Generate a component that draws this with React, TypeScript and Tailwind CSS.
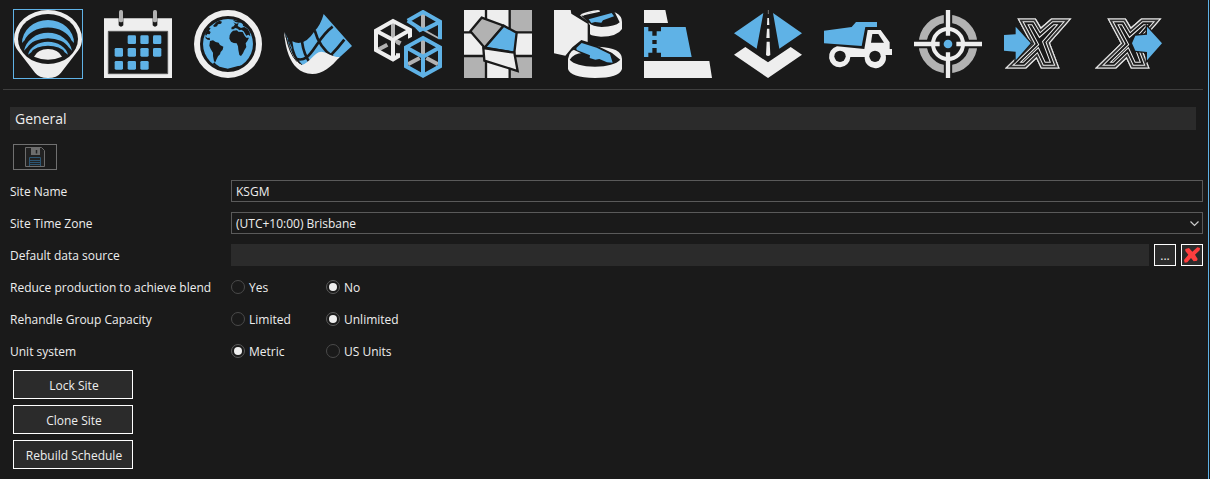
import React, { useId, useState } from "react";

const BLUE = "#5fb2e6";
const WHITE = "#eeeeee";
const GREY = "#b2b2b2";
const DARK = "#1a1a1a";

type IconProps = { children: React.ReactNode; left?: boolean };

/* Toolbar drawings share a 204-unit square canvas. */
function Canvas({ children, left = false }: IconProps) {
  return (
    <svg
      viewBox={left ? "42 30 204 204" : "312 30 204 204"}
      className="size-[68px]"
      aria-hidden="true"
    >
      {children}
    </svg>
  );
}

function PitIcon() {
  return (
    <Canvas left>
      <path d="M42 118A102 88 0 0 1 246 118Q246 137 235 151L183 218Q171 234 144 234Q117 234 105 218L53 151Q42 137 42 118Z" fill={WHITE} />
      <ellipse cx="144" cy="117" rx="90" ry="75" fill={DARK} />
      <g fill={BLUE}>
        <path d="M66 129A78 69 0 0 1 222 129L214 121A72 50 0 0 0 74 121Z" />
        <path d="M72 152A73 64 0 0 1 216 152L206 142A66 42 0 0 0 82 142Z" />
        <path d="M84 164A61 47 0 0 1 204 164L194 157A52 27 0 0 0 94 157Z" />
      </g>
      <path d="M102 170Q114 147 144 147Q174 147 186 170Q144 188 102 170Z" fill={WHITE} />
    </Canvas>
  );
}

function CalendarIcon() {
  const cells = [
    [383, 106], [421, 106], [459, 106],
    [344, 144], [383, 144], [421, 144], [459, 144],
    [344, 183], [383, 183], [421, 183],
  ];
  return (
    <Canvas>
      <path d="M312 55H516V234H312Z" fill={WHITE} />
      <path d="M325 94H503V221H325Z" fill={DARK} stroke="#555" strokeWidth="3" />
      <path d="M356 54H370V76Q363 84 356 76ZM458 54H472V76Q465 84 458 76Z" fill={DARK} />
      <rect x="357" y="30" width="12" height="37" rx="5" fill={GREY} />
      <rect x="459" y="30" width="12" height="37" rx="5" fill={GREY} />
      {cells.map(([x, y]) => (
        <rect key={`${x}-${y}`} x={x} y={y} width="25" height="26" rx="4" fill={BLUE} />
      ))}
    </Canvas>
  );
}

function GlobeIcon() {
  return (
    <Canvas left>
      <circle cx="144" cy="132" r="93" fill="none" stroke={WHITE} strokeWidth="18" />
      <circle cx="144" cy="132" r="75" fill={BLUE} />
      <g fill={DARK}>
        <path d="M90 123L99 121L107 126L116 128L120 135L130 140L128 149L122 156L120 163L114 169L109 179L106 187L102 184L99 168L99 158L92 147L88 137Z" />
        <path d="M153 98L159 92L171 91L175 95L188 96L194 107L199 113L207 113L202 123L197 130L199 141L193 151L189 160L183 168L178 165L175 149L174 139L170 130L161 129L153 125L148 116L149 106Z" />
        <path d="M154 88L155 81L161 79L165 73L160 67L169 71L176 69L173 78L183 84L193 81L203 87L209 97L211 109L205 104L199 107L191 94L184 89L178 91L173 86L166 84L160 88Z" />
        <path d="M109 67L118 62L126 65L123 71L114 73L111 79L104 81L99 78ZM84 83L92 84L87 92L92 96L89 103L82 102L78 108L75 102ZM76 109L82 114L89 113L90 120L83 119L77 115Z" />
        <path d="M158 59L169 62L177 60L184 67L177 68L166 66ZM188 68L201 77L206 87L197 82L189 77Z" />
        <path d="M103 187L108 193L119 200L143 206L160 202L174 198L185 197Q144 225 98 193Z" />
      </g>
    </Canvas>
  );
}

function SurfaceIcon() {
  return (
    <Canvas>
      <path d="M313 97L319 110C330 151 340 181 365 197L340 176L335 142C326 121 320 108 313 97Z" fill={BLUE} />
      <path d="M431 42L516 138L474 176L424 160L370 198Q342 171 337 124Q373 142 404 93Q422 75 431 42Z" fill={BLUE} />
      <path d="M404 91Q418 142 458 170M366 125Q371 164 391 190M338 172C394 202 400 122 458 80M452 166Q473 145 493 119" fill="none" stroke={DARK} strokeWidth="8" />
      <path d="M312 96C330 153 344 181 365 195C388 190 402 156 424 155C446 157 452 171 479 171C453 201 428 222 397 222C358 221 337 194 326 165Q316 140 312 96Z" fill={WHITE} />
      <path d="M318 109Q327 159 351 185M324 117Q335 164 359 191" fill="none" stroke={DARK} strokeWidth="3" />
    </Canvas>
  );
}

function CubesIcon() {
  return (
    <Canvas left>
      <g fill="none" strokeWidth="12" strokeLinejoin="miter">
        <path d="M99 61V112M51 151L82 134M105 121L122 130M113 134L119 123" stroke={GREY} />
        <path d="M150 116V90L99 63L48 92V150L99 178L114 169V160M48 92L99 119L150 90M99 119V178" stroke={WHITE} />
        <path d="M189 38V92M174 84L237 119" stroke={GREY} />
        <path d="M143 62L189 36L240 65V118M143 62L189 91L240 65M170 80L184 94" stroke={BLUE} />
      </g>
      <path d="M122 130V129L189 92L246 123V132L189 105Z" fill={DARK} />
      <g fill="none" strokeWidth="12">
        <path d="M189 116V166M144 193L179 174M234 193L199 174" stroke={GREY} />
        <path d="M189 114L240 142V199L189 227L138 199V142ZM138 142L189 170L240 142M189 170V227" stroke={BLUE} />
      </g>
    </Canvas>
  );
}

function BlocksIcon() {
  return (
    <Canvas>
      <path d="M312 30H516V234H312Z" fill={WHITE} />
      <path d="M450 30H516V98H450ZM312 168H380V234H312ZM450 168H516V234H450Z" fill={GREY} />
      <path d="M378 30V234M449 30V234M312 97H516M312 168H516" fill="none" stroke={DARK} strokeWidth="7" />
      <g stroke={DARK} strokeWidth="7" strokeLinejoin="miter">
        <path d="M365 53L431 77L374 143L331 94Z" fill={GREY} />
        <path d="M431 77L470 98L463 158L374 143Z" fill={BLUE} />
        <path d="M370 144L463 158L473 213L373 182Z" fill={WHITE} />
      </g>
    </Canvas>
  );
}

function StockpileIcon() {
  return (
    <Canvas left>
      <path d="M117 43Q177 14 229 39Q246 48 246 66V87Q232 110 183 110Q158 109 150 103V75Z" fill={WHITE} />
      <path d="M124 47L180 35L178 30L220 30L225 38L239 67Q226 80 185 81Q158 79 146 68Z" fill={DARK} />
      <path d="M94 30L180 30L118 46L146 66V75L90 40Z" fill={DARK} />
      <path d="M122 43Q145 32 177 30L174 34Q148 37 130 47Z" fill={WHITE} />
      <path d="M146 58L215 39L222 49L189 61L184 68L165 66L154 69Z" fill={BLUE} />
      <path d="M42 30H92L94 41L143 71V126L124 120L97 142L76 167L42 160Z" fill={WHITE} />
      <path d="M84 177Q88 146 125 142L175 140Q246 143 246 177V207Q238 234 165 234Q91 233 84 207Z" fill={WHITE} />
      <path d="M89 179Q103 160 127 159L165 141L217 160L241 179Q222 199 165 200Q107 199 89 179Z" fill={DARK} />
      <path d="M104 144L125 122L178 140L216 159L223 188L190 190L160 181L145 170L101 149Z" fill={DARK} />
      <path d="M109 144L125 129L170 143L210 163L218 188L201 187L178 177L166 179L149 174L150 166L110 150Z" fill={BLUE} />
    </Canvas>
  );
}

function BenchIcon() {
  return (
    <Canvas>
      <path d="M312 30H376L384 69H312ZM312 183H508L516 234H312Z" fill={WHITE} />
      <path d="M312 81H437L455 171H363V158H350V144H337V158H325V171H312ZM325 81V94H337V107H350V94H363V81ZM337 120V132H350V120Z" fill={BLUE} fillRule="evenodd" />
    </Canvas>
  );
}

function RoadIcon() {
  return (
    <Canvas left>
      <path d="M130 39L110 146L42 100ZM159 39L246 100L178 146Z" fill={BLUE} />
      <path d="M76 141L144 187L212 141L246 164L144 234L42 164Z" fill={WHITE} />
      <path d="M142 54H147L148 75H141ZM141 86H148L149 114H139ZM140 125H149L151 165Q144 171 138 165Z" fill={WHITE} />
      <path d="M145 30V42" stroke="#777" strokeWidth="3" />
    </Canvas>
  );
}

function TruckIcon() {
  return (
    <Canvas>
      <path d="M312 92L395 81L408 66H471V81H436L425 138L312 130Z" fill={BLUE} />
      <path d="M443 90H482L509 127V147H516V165H497A32 32 0 1 1 434 171H391A32 32 0 1 1 351 139L433 147Z" fill={WHITE} />
      <path d="M457 102H475L492 128H453Z" fill={DARK} />
      <circle cx="360" cy="169" r="17" fill={DARK} />
      <circle cx="465" cy="169" r="17" fill={DARK} />
    </Canvas>
  );
}

function TargetIcon() {
  return (
    <Canvas left>
      <circle cx="144" cy="132" r="76" fill="none" stroke={GREY} strokeWidth="24" />
      <path d="M144 30V234M42 132H246" stroke={DARK} strokeWidth="25" />
      <path d="M144 82V107M144 157V182M94 132H119M169 132H194" stroke={DARK} strokeWidth="23" />
      <circle cx="144" cy="132" r="45" fill="none" stroke={WHITE} strokeWidth="12" />
      <path d="M144 30V107M144 157V234M42 132H119M169 132H246" stroke={WHITE} strokeWidth="13" />
      <circle cx="144" cy="132" r="13" fill={BLUE} />
    </Canvas>
  );
}

const X_SHAPE = "M82 55H137L153 82L184 55H245L180 129L209 206H153L139 176L108 206H44L122 130Z";

function XOutline() {
  const id = useId();
  const bands: [number, string][] = [
    [42, WHITE], [36, DARK], [24, WHITE], [18, "#333333"], [7, WHITE],
  ];
  return (
    <>
      <clipPath id={id}>
        <path d={X_SHAPE} />
      </clipPath>
      <g clipPath={`url(#${id})`} fill="none">
        {bands.map(([width, color]) => (
          <path key={width} d={X_SHAPE} stroke={color} strokeWidth={width} />
        ))}
      </g>
    </>
  );
}

function ImportIcon() {
  const arrow = "M42 105L77 103V80L122 130L77 181V155L42 152Z";
  return (
    <Canvas left>
      <XOutline />
      <path d={arrow} fill={BLUE} stroke={DARK} strokeWidth="8" />
      <path d={arrow} fill={BLUE} />
    </Canvas>
  );
}

function ExportIcon() {
  const arrow = "M436 107L471 104V80L516 130L471 181V156L436 152L426 130Z";
  return (
    <Canvas>
      <g transform="translate(270 0)">
        <XOutline />
      </g>
      <path d={arrow} fill={BLUE} stroke={DARK} strokeWidth="8" />
      <path d={arrow} fill={BLUE} />
    </Canvas>
  );
}

const tools = [
  { name: "General", Icon: PitIcon },
  { name: "Calendar", Icon: CalendarIcon },
  { name: "Location", Icon: GlobeIcon },
  { name: "Surfaces", Icon: SurfaceIcon },
  { name: "Block models", Icon: CubesIcon },
  { name: "Solids", Icon: BlocksIcon },
  { name: "Stockpiles", Icon: StockpileIcon },
  { name: "Benches", Icon: BenchIcon },
  { name: "Roads", Icon: RoadIcon },
  { name: "Equipment", Icon: TruckIcon },
  { name: "Targets", Icon: TargetIcon },
  { name: "Import", Icon: ImportIcon },
  { name: "Export", Icon: ExportIcon },
];

function SaveIcon() {
  return (
    <svg viewBox="0 0 20 20" className="size-5" aria-hidden="true">
      <path d="M.5 .5H16.5L19.5 3.5V19.5H.5Z" fill="#222222" stroke="#6d6d6d" />
      <path d="M6 0H15V8H6Z" fill="#6d6d6d" />
      <path d="M11.5 3V6.5" stroke="#222222" strokeWidth="1.5" />
      <path d="M4.500 19V10.500H15.500V19M5 13.500H15M5 15.500H15M5 17.500H15" fill="none" stroke="#2d5673" />
    </svg>
  );
}

function ClearIcon() {
  return (
    <svg viewBox="0 0 48 46" className="size-4" aria-hidden="true">
      <path d="M4 5L15 2L25 13L40 0L48 2L47 9L33 22L41 35L39 40L29 42L21 32L10 45L2 46L0 38L13 22L4 11Z" fill="#ff3e3e" />
    </svg>
  );
}

function Row({ label, htmlFor, children }: { label: string; htmlFor: string; children: React.ReactNode }) {
  return (
    <div className="grid h-8 grid-cols-[221px_minmax(0,1fr)] items-center">
      <label htmlFor={htmlFor} className="pt-0.5">{label}</label>
      {children}
    </div>
  );
}

function RadioRow({ label, name, options, initial }: { label: string; name: string; options: string[]; initial: string }) {
  const [value, setValue] = useState(initial);
  return (
    <div role="radiogroup" aria-labelledby={name} className="grid h-8 grid-cols-[221px_minmax(0,1fr)] items-center">
      <span id={name} className="pt-0.5">{label}</span>
      <div className="flex">
        {options.map((option) => (
          <label key={option} className="flex w-[95px] items-center gap-1">
            <input
              type="radio"
              name={name}
              value={option}
              checked={value === option}
              onChange={() => setValue(option)}
              className="size-3.5 shrink-0 appearance-none rounded-full border border-[#4a4a4a] bg-clip-content p-[2px] checked:border-[#5a5a5a] checked:bg-[#eeeeee]"
            />
            <span className="pt-0.5 whitespace-nowrap">{option}</span>
          </label>
        ))}
      </div>
    </div>
  );
}

export default function App() {
  return (
    <div className="min-h-screen bg-[#1a1a1a] pr-px font-['Open_Sans',sans-serif] text-[12px] leading-4 text-[#eeeeee]">
      <div className="min-h-screen border-r border-[#5fb2e6] pr-[5px]">
        <nav aria-label="Site settings" className="ml-[3px] flex gap-5 border-b border-[#3f3f3f] px-[10px] pt-[9px] pb-[10px]">
          {tools.map(({ name, Icon }, index) => (
            <button
              key={name}
              type="button"
              aria-label={name}
              className={
                index === 0
                  ? "shrink-0 border border-[#5fb2e6]"
                  : "shrink-0 border border-transparent"
              }
            >
              <Icon />
            </button>
          ))}
        </nav>

        <main className="pt-[17px] pl-[10px]">
          <h1 className="mr-[7px] bg-[#2b2b2b] px-[5px] text-[14px] leading-[23px]">General</h1>

          <button
            type="button"
            aria-label="Save"
            disabled
            className="mt-3.5 mb-[5px] ml-[3px] flex h-[26px] w-11 items-center justify-center border border-[#707070]"
          >
            <SaveIcon />
          </button>

          <form onSubmit={(event) => event.preventDefault()}>
            <Row label="Site Name" htmlFor="site-name">
              <input
                id="site-name"
                type="text"
                defaultValue="KSGM"
                className="h-[22px] w-full border border-[#5a5a5a] bg-transparent px-1 pt-px outline-none"
              />
            </Row>
            <Row label="Site Time Zone" htmlFor="time-zone">
              <div className="relative">
                <select
                  id="time-zone"
                  className="block h-[22px] w-full appearance-none border border-[#5a5a5a] bg-[#1a1a1a] px-1 pt-0.5 outline-none"
                >
                  <option>(UTC+10:00) Brisbane</option>
                </select>
                <svg
                  viewBox="0 0 9 6"
                  className="pointer-events-none absolute top-[9px] right-1 h-1.5 w-[9px]"
                  aria-hidden="true"
                >
                  <path d="M.5 .5L4.500 4.500L8.500 .5" fill="none" stroke="#cccccc" strokeWidth="1.200" />
                </svg>
              </div>
            </Row>
            <Row label="Default data source" htmlFor="data-source">
              <div className="flex gap-[5px]">
                <input
                  id="data-source"
                  type="text"
                  readOnly
                  className="h-[22px] min-w-0 flex-1 bg-[#2b2b2b] px-1 outline-none"
                />
                <button type="button" aria-label="Browse" className="size-[22px] border border-white bg-[#2b2b2b] pt-0.5">
                  ...
                </button>
                <button
                  type="button"
                  aria-label="Clear data source"
                  className="flex size-[22px] items-center justify-center border border-white bg-[#2b2b2b]"
                >
                  <ClearIcon />
                </button>
              </div>
            </Row>
            <RadioRow label="Reduce production to achieve blend" name="reduce-production" options={["Yes", "No"]} initial="No" />
            <RadioRow label="Rehandle Group Capacity" name="rehandle-capacity" options={["Limited", "Unlimited"]} initial="Unlimited" />
            <RadioRow label="Unit system" name="unit-system" options={["Metric", "US Units"]} initial="Metric" />
          </form>

          <div className="mt-[3px] ml-[3px] flex w-[120px] flex-col gap-1.5">
            {["Lock Site", "Clone Site", "Rebuild Schedule"].map((action) => (
              <button key={action} type="button" className="h-[29px] border border-white bg-[#2b2b2b] pt-0.5 pl-0.5">
                {action}
              </button>
            ))}
          </div>
        </main>
      </div>
    </div>
  );
}
